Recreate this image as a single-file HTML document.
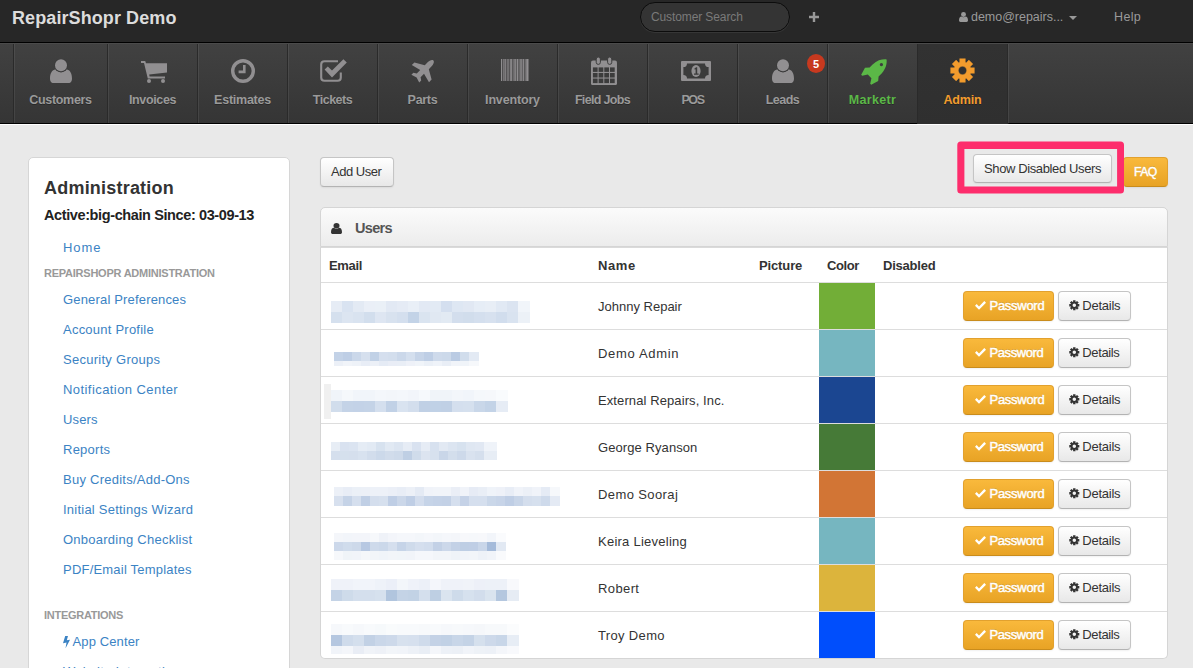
<!DOCTYPE html>
<html><head><meta charset="utf-8"><title>RepairShopr Demo</title>
<style>
*{box-sizing:border-box;margin:0;padding:0}
html,body{width:1193px;height:668px;overflow:hidden}
body{background:#e9e9e9;font-family:"Liberation Sans",sans-serif;font-size:13px;color:#333;position:relative}
svg{display:block;position:absolute}
.t{position:absolute;white-space:nowrap}
#top{position:absolute;left:0;top:0;width:1193px;height:42px;background:#272727}
#brand{left:12px;top:6px;font-size:18px;font-weight:bold;color:#dcdcdc;line-height:24px;letter-spacing:-0.1px}
#search{position:absolute;left:640px;top:2px;width:150px;height:30px;border-radius:15px;background:#343434;border:1px solid #0c0c0c;box-shadow:0 1px 0 rgba(255,255,255,.07)}
#search span{position:absolute;left:10px;top:7px;font-size:12px;line-height:14px;color:#7a7a7a;white-space:nowrap;font-weight:bold}
.toptxt{color:#9a9a9a;font-size:12.5px;line-height:16px;margin-top:1px}
#navline{position:absolute;left:0;top:42px;width:1193px;height:1px;background:#000}
#nav{position:absolute;left:0;top:43px;width:1193px;height:81px;background:linear-gradient(#414141,#353535);border-top:1px solid #4b4b4b;border-bottom:1px solid #000;box-shadow:0 1px 0 #fff}
.ni{position:absolute;top:0;height:79px;border-left:1px solid #2a2a2a;box-shadow:inset 1px 0 0 rgba(255,255,255,.07)}
.ni .lbl{position:absolute;left:0;right:0;top:49px;text-align:center;font-size:12.5px;line-height:14px;font-weight:bold;color:#9a9a9a;white-space:nowrap;text-shadow:0 1px 0 rgba(0,0,0,.3)}
.ni.active{background:linear-gradient(#323232,#2f2f2f);box-shadow:none;height:80px}
#navend{position:absolute;top:0;height:80px;width:2px;border-left:1px solid #2a2a2a;box-shadow:inset 1px 0 0 rgba(255,255,255,.07)}
#badge{position:absolute;left:807px;top:54px;width:18px;height:19px;border-radius:9px/9.5px;background:#c7391f;color:#fff;font-size:11px;font-weight:bold;text-align:center;line-height:20px}
/* sidebar */
#side{position:absolute;left:28px;top:157px;width:262px;height:530px;background:#fff;border:1px solid #d6d6d6;border-radius:5px}
#side .h1{left:15px;top:18px;font-size:18px;font-weight:bold;color:#333;line-height:24px}
#side .h2{left:15px;top:47px;font-size:14.5px;font-weight:bold;color:#222;line-height:20px}
.lnk{color:#3b83c4;font-size:13px;line-height:18px;left:34px}
.sh{left:15px;margin-top:1px;font-size:11px;font-weight:bold;color:#999;line-height:14px;text-transform:uppercase}
/* buttons */
.btn{position:absolute;height:30px;border:1px solid #c5c5c5;border-bottom-color:#b3b3b3;border-radius:4px;background:linear-gradient(#ffffff,#e8e8e8);box-shadow:0 1px 2px rgba(0,0,0,.06);color:#333;font-size:13px;line-height:28px;white-space:nowrap}
.btn.w{background:linear-gradient(#f9b93c,#e8a325);border-color:#e2a12e #e2a12e #c98c1c;color:#fff;-webkit-text-stroke:0.45px #fff;text-shadow:0 -1px 0 rgba(0,0,0,.15)}
.btn .t{top:0}
/* widget */
#wh{position:absolute;left:320px;top:207px;width:848px;height:40px;background:linear-gradient(#fbfbfb,#ececec);border:1px solid #d5d5d5;border-radius:5px 5px 0 0}
#wb{position:absolute;left:320px;top:247px;width:848px;height:412px;background:#fff;border:1px solid #d5d5d5;border-top:1px solid #dadada;border-radius:0 0 5px 5px;overflow:hidden}
.th{font-weight:bold;color:#333;font-size:13px;line-height:16px;top:10px}
.row{position:absolute;left:0;width:846px;height:47px;border-top:1px solid #ddd}
.row .nm{left:277px;top:16px;font-size:13px;line-height:16px;color:#333}
.sw{position:absolute;left:498px;top:0;width:56px;height:46px}
.bl{position:absolute}
#pink{position:absolute;left:957.5px;top:141.7px;width:166.5px;height:51.5px;border:6.7px solid #fc2e6d;border-radius:5px}
</style></head><body>
<div id="top">
<div class="t " id="brand" style="letter-spacing:0.09px">RepairShopr Demo</div>
<div id="search"><div class="t " style="left:10px;top:7px;font-size:12px;line-height:14px;color:#7a7a7a;letter-spacing:-0.11px">Customer Search</div></div>
<svg style="left:809px;top:12px" width="10" height="10" viewBox="0 0 10 10"><path d="M3.8 0 H6.2 V3.8 H10 V6.2 H6.2 V10 H3.8 V6.2 H0 V3.8 H3.8 Z" fill="#999"/></svg>
<svg style="left:959px;top:12px" width="9" height="10" viewBox="0 0 22 24"><circle cx="11" cy="6" r="6" fill="#999"/><path d="M0 20 C0 13.5 2.5 11 6 10.6 C7.3 11.8 9 12.6 11 12.6 C13 12.6 14.7 11.8 16 10.6 C19.5 11 22 13.5 22 20 C22 22.5 20.5 24 18.5 24 L3.5 24 C1.5 24 0 22.5 0 20 Z" fill="#999"/></svg>
<div class="t toptxt" style="left:971px;top:8px;letter-spacing:-0.02px">demo@repairs...</div>
<svg style="left:1069px;top:16px" width="8" height="4" viewBox="0 0 8 4"><path d="M0 0 H8 L4 4 Z" fill="#999"/></svg>
<div class="t toptxt" style="left:1114px;top:8px;letter-spacing:0.35px">Help</div>
</div><div id="navline"></div><div id="nav">
<div class="ni" style="left:13px;width:94px"><svg style="left:36.0px;top:15.0px" width="22" height="24.4" viewBox="0 0 22 24"><path d="M0 19.5 C0 13.8 2 10.8 5.6 10 C6.8 11.8 8.8 12.8 11 12.8 C13.2 12.8 15.2 11.8 16.4 10 C20 10.8 22 13.8 22 19.5 C22 22.5 20.5 24 18 24 L4 24 C1.5 24 0 22.5 0 19.5 Z" fill="#918f91"/><circle cx="11" cy="6.2" r="7" fill="#3c3c3c"/><circle cx="11" cy="6" r="6" fill="#918f91"/></svg><div class="t lbl" style="letter-spacing:-0.31px">Customers</div></div>
<div class="ni" style="left:107px;width:90px"><svg style="left:33.0px;top:17.0px" width="26" height="22" viewBox="0 0 26 22"><path d="M0 0 H4.2 L5 2.2 H26 V11.5 L8.2 13.6 L8.6 15.6 H24 V17.6 H6.8 L3 2 H0 Z" fill="#918f91"/><circle cx="8" cy="20" r="2" fill="#918f91"/><circle cx="22" cy="20" r="2" fill="#918f91"/></svg><div class="t lbl" style="letter-spacing:-0.36px">Invoices</div></div>
<div class="ni" style="left:197px;width:90px"><svg style="left:33.0px;top:15.0px" width="24" height="24" viewBox="0 0 24 24"><circle cx="12" cy="12" r="10.3" fill="none" stroke="#918f91" stroke-width="3.4"/><path d="M12 6 H14.6 V14.2 H7.6 V11.6 H12 Z" fill="#918f91"/></svg><div class="t lbl" style="letter-spacing:-0.25px">Estimates</div></div>
<div class="ni" style="left:287px;width:90px"><svg style="left:31.0px;top:15.0px" width="28" height="24" viewBox="0 0 28 24"><path d="M19 2.2 H5.5 Q2.2 2.2 2.2 5.5 V18.5 Q2.2 21.8 5.5 21.8 H18.5 Q21.8 21.8 21.8 18.5 V13.5" fill="none" stroke="#918f91" stroke-width="2.1"/><path d="M5.6 10.6 L8.8 7.4 L13 11.6 L24.4 0.2 L27.8 3.6 L13 18.4 Z" fill="#918f91"/></svg><div class="t lbl" style="letter-spacing:-0.50px">Tickets</div></div>
<div class="ni" style="left:377px;width:90px"><svg style="left:33.0px;top:14.5px" width="24" height="24" viewBox="0 0 24 24"><path d="M22.4 1.6 C23.6 2.8 22.4 5.6 20.4 7.6 L17.8 10.2 L20.6 20.6 L18 23.2 L13 14.8 L9.6 18.2 L10.2 21.6 L8.2 23.6 L5.6 18.4 L0.4 15.8 L2.4 13.8 L5.8 14.4 L9.2 11 L0.8 6 L3.4 3.4 L13.8 6.2 L16.4 3.6 C18.4 1.6 21.2 0.4 22.4 1.6 Z" fill="#918f91"/></svg><div class="t lbl" style="letter-spacing:-0.30px">Parts</div></div>
<div class="ni" style="left:467px;width:90px"><svg style="left:32.5px;top:14.7px" width="28.6" height="22.4" viewBox="0 0 29 22.4" preserveAspectRatio="none"><rect x="0" y="0" width="28.6" height="22.4" fill="#918f91" opacity="0.22"/><rect x="0" y="0" width="1" height="22.4" fill="#918f91"/><rect x="2" y="0" width="0.6" height="22.4" fill="#918f91"/><rect x="3.6" y="0" width="1.2" height="22.4" fill="#918f91"/><rect x="6" y="0" width="0.6" height="22.4" fill="#918f91"/><rect x="7.6" y="0" width="0.6" height="22.4" fill="#918f91"/><rect x="9.4" y="0" width="1.6" height="22.4" fill="#918f91"/><rect x="12" y="0" width="0.6" height="22.4" fill="#918f91"/><rect x="13.6" y="0" width="1.4" height="22.4" fill="#918f91"/><rect x="16" y="0" width="1.2" height="22.4" fill="#918f91"/><rect x="18" y="0" width="0.6" height="22.4" fill="#918f91"/><rect x="19.6" y="0" width="1.4" height="22.4" fill="#918f91"/><rect x="22" y="0" width="1.2" height="22.4" fill="#918f91"/><rect x="24.2" y="0" width="0.6" height="22.4" fill="#918f91"/><rect x="25.6" y="0" width="1.8" height="22.4" fill="#918f91"/><rect x="28" y="0" width="0.6" height="22.4" fill="#918f91"/></svg><div class="t lbl" style="letter-spacing:-0.16px">Inventory</div></div>
<div class="ni" style="left:557px;width:90px"><svg style="left:33.0px;top:13.0px" width="26" height="28.2" viewBox="0 0 26 28.2"><path d="M2 3.6 H24 Q26 3.6 26 5.6 V26.2 Q26 28.2 24 28.2 H2 Q0 28.2 0 26.2 V5.6 Q0 3.6 2 3.6 Z" fill="#918f91"/><rect x="1.9" y="10.4" width="4.7" height="4.5" fill="#3c3c3c"/><rect x="7.6" y="10.4" width="4.7" height="4.5" fill="#3c3c3c"/><rect x="13.3" y="10.4" width="4.7" height="4.5" fill="#3c3c3c"/><rect x="19.0" y="10.4" width="4.7" height="4.5" fill="#3c3c3c"/><rect x="1.9" y="16.0" width="4.7" height="4.5" fill="#3c3c3c"/><rect x="7.6" y="16.0" width="4.7" height="4.5" fill="#3c3c3c"/><rect x="13.3" y="16.0" width="4.7" height="4.5" fill="#3c3c3c"/><rect x="19.0" y="16.0" width="4.7" height="4.5" fill="#3c3c3c"/><rect x="1.9" y="21.6" width="4.7" height="4.5" fill="#3c3c3c"/><rect x="7.6" y="21.6" width="4.7" height="4.5" fill="#3c3c3c"/><rect x="13.3" y="21.6" width="4.7" height="4.5" fill="#3c3c3c"/><rect x="19.0" y="21.6" width="4.7" height="4.5" fill="#3c3c3c"/><rect x="5.2" y="0" width="4.2" height="7.4" rx="2.1" fill="#918f91" stroke="#3c3c3c" stroke-width="1"/><rect x="16.6" y="0" width="4.2" height="7.4" rx="2.1" fill="#918f91" stroke="#3c3c3c" stroke-width="1"/></svg><div class="t lbl" style="letter-spacing:-0.66px">Field Jobs</div></div>
<div class="ni" style="left:647px;width:90px"><svg style="left:33.0px;top:17.0px" width="30" height="20" viewBox="0 0 30 20"><rect x="0" y="0" width="30" height="20" rx="1" fill="#918f91"/><path d="M6 2.4 H24 Q24 6 27.6 6 V14 Q24 14 24 17.6 H6 Q6 14 2.4 14 V6 Q6 6 6 2.4 Z" fill="#3b3b3b"/><ellipse cx="15" cy="10" rx="4.6" ry="6" fill="#918f91"/><path d="M13.4 7.6 L15.2 6.2 H16.2 V12.6 H17.6 V13.8 H13 V12.6 H14.6 V8.2 L13.8 8.8 Z" fill="#3b3b3b"/></svg><div class="t lbl" style="letter-spacing:-1.40px">POS</div></div>
<div class="ni" style="left:737px;width:90px"><svg style="left:33.5px;top:15.0px" width="22" height="24.4" viewBox="0 0 22 24"><path d="M0 19.5 C0 13.8 2 10.8 5.6 10 C6.8 11.8 8.8 12.8 11 12.8 C13.2 12.8 15.2 11.8 16.4 10 C20 10.8 22 13.8 22 19.5 C22 22.5 20.5 24 18 24 L4 24 C1.5 24 0 22.5 0 19.5 Z" fill="#918f91"/><circle cx="11" cy="6.2" r="7" fill="#3c3c3c"/><circle cx="11" cy="6" r="6" fill="#918f91"/></svg><div class="t lbl" style="letter-spacing:-0.50px">Leads</div></div>
<div class="ni" style="left:827px;width:90px"><svg style="left:33.0px;top:14.5px" width="26" height="26" viewBox="0 0 26 26"><path d="M25.6 0.4 C26 4.5 25 9.5 20.6 14.4 L17.6 17.4 L17.2 22 L10.2 25.8 L9.2 24.8 L10.4 19.2 L6.8 15.6 L1.2 16.8 L0.2 15.8 L4 8.8 L8.6 8.4 L11.6 5.4 C16.5 1 21.5 0 25.6 0.4 Z M20.4 4 a1.6 1.6 0 1 0 0.01 0 Z" fill="#5bb847" fill-rule="evenodd"/></svg><div class="t lbl" style="color:#5bb847;letter-spacing:0.33px">Marketr</div></div>
<div class="ni active" style="left:917px;width:90px"><svg style="left:32.4px;top:14.3px" width="25" height="25" viewBox="0 0 25 25"><path d="M9.71 4.36 L9.66 0.64 L15.34 0.64 L15.29 4.36 L16.28 4.78 L18.88 2.10 L22.90 6.12 L20.22 8.72 L20.64 9.71 L24.36 9.66 L24.36 15.34 L20.64 15.29 L20.22 16.28 L22.90 18.88 L18.88 22.90 L16.28 20.22 L15.29 20.64 L15.34 24.36 L9.66 24.36 L9.71 20.64 L8.72 20.22 L6.12 22.90 L2.10 18.88 L4.78 16.28 L4.36 15.29 L0.64 15.34 L0.64 9.66 L4.36 9.71 L4.78 8.72 L2.10 6.12 L6.12 2.10 L8.72 4.78 Z M8.35 12.50 a4.15 4.15 0 1 0 8.30 0 a4.15 4.15 0 1 0 -8.30 0 Z" fill="#f39c2d" fill-rule="evenodd" stroke="#f39c2d" stroke-width="0.4" stroke-linejoin="round"/></svg><div class="t lbl" style="color:#f39c2d;letter-spacing:-0.17px">Admin</div></div>
<div id="navend" style="left:1007px"></div>
</div>
<div id="badge">5</div>
<div id="side">
<div class="t h1" style="letter-spacing:0.21px">Administration</div>
<div class="t h2" style="letter-spacing:-0.39px">Active:big-chain Since: 03-09-13</div>
<div class="t lnk" style="top:81px;letter-spacing:0.93px">Home</div>
<div class="t lnk" style="top:133px;letter-spacing:0.17px">General Preferences</div>
<div class="t lnk" style="top:163px;letter-spacing:0.23px">Account Profile</div>
<div class="t lnk" style="top:193px;letter-spacing:0.27px">Security Groups</div>
<div class="t lnk" style="top:223px;letter-spacing:0.43px">Notification Center</div>
<div class="t lnk" style="top:253px;letter-spacing:0.13px">Users</div>
<div class="t lnk" style="top:283px;letter-spacing:0.25px">Reports</div>
<div class="t lnk" style="top:313px;letter-spacing:0.25px">Buy Credits/Add-Ons</div>
<div class="t lnk" style="top:343px;letter-spacing:0.23px">Initial Settings Wizard</div>
<div class="t lnk" style="top:373px;letter-spacing:0.25px">Onboarding Checklist</div>
<div class="t lnk" style="top:403px;letter-spacing:0.21px">PDF/Email Templates</div>
<div class="t sh" style="top:107px;letter-spacing:-0.24px">REPAIRSHOPR ADMINISTRATION</div>
<div class="t sh" style="top:449px;letter-spacing:-0.27px">INTEGRATIONS</div>
<svg style="left:33.6px;top:477.5px" width="7" height="12.4" viewBox="0 0 7 12.4"><path d="M2.2 0 H5 L3.8 4.3 L7 3.7 L2.5 12.4 L3.5 6.5 L0 7.2 Z" fill="#3b83c4"/></svg>
<div class="t lnk" style="left:43.5px;top:475px;letter-spacing:0.12px">App Center</div>
<div class="t lnk" style="top:505px;letter-spacing:0.28px">Website Integration</div>
</div>
<div class="btn" style="left:320px;top:157px;width:74px"><div class="t " style="left:10px;letter-spacing:-0.47px">Add User</div></div>
<div class="btn" style="left:973px;top:154px;width:139px;height:29px"><div class="t " style="left:10px;line-height:27px;letter-spacing:-0.38px">Show Disabled Users</div></div>
<div class="btn w" style="left:1123px;top:157px;width:45px"><div class="t " style="left:10px;font-size:12.2px;letter-spacing:-0.63px">FAQ</div></div>
<svg style="left:950px;top:135px" width="180" height="65" viewBox="950 135 180 65"><path d="M960.8 141.6 H1120.5 Q1124 141.6 1124 145.1 V190 Q1124 193.5 1120.5 193.5 H960.8 Q957.3 193.5 957.3 190 V145.1 Q957.3 141.6 960.8 141.6 Z M964.4 148.9 V186.5 H1117.1 V148.9 Z" fill="#fd2d6c" fill-rule="evenodd"/></svg>
<div id="wh">
<svg style="left:10px;top:15px" width="11" height="11" viewBox="0 0 22 24" preserveAspectRatio="none"><circle cx="11" cy="6" r="6" fill="#333"/><path d="M0 20 C0 13.5 2.5 11 6 10.6 C7.3 11.8 9 12.6 11 12.6 C13 12.6 14.7 11.8 16 10.6 C19.5 11 22 13.5 22 20 C22 22.5 20.5 24 18.5 24 L3.5 24 C1.5 24 0 22.5 0 20 Z" fill="#333"/></svg>
<div class="t " style="left:34px;top:11px;font-size:14.5px;font-weight:bold;color:#555;line-height:18px;letter-spacing:-0.69px">Users</div>
</div><div id="wb">
<div class="t th" style="left:8px;letter-spacing:-0.32px">Email</div>
<div class="t th" style="left:277px;letter-spacing:0.58px">Name</div>
<div class="t th" style="left:438px;letter-spacing:-0.13px">Picture</div>
<div class="t th" style="left:506px;letter-spacing:-0.38px">Color</div>
<div class="t th" style="left:562px;letter-spacing:-0.22px">Disabled</div>
<div class="row" style="top:34px">
<div class="bl" style="left:10px;top:18px;width:199px;height:11px;background:linear-gradient(90deg,#e6ecf5 0px,#e6ecf5 11px,#d9e3f1 11px,#d9e3f1 22px,#e3eaf4 22px,#e3eaf4 33px,#eaeff7 33px,#eaeff7 44px,#eaf0f7 44px,#eaf0f7 55px,#e2e9f4 55px,#e2e9f4 66px,#e5ebf5 66px,#e5ebf5 77px,#e9eff7 77px,#e9eff7 88px,#e2e9f4 88px,#e2e9f4 99px,#e2eaf4 99px,#e2eaf4 110px,#d4dfef 110px,#d4dfef 121px,#dee7f3 121px,#dee7f3 132px,#e1e8f3 132px,#e1e8f3 143px,#e6edf6 143px,#e6edf6 154px,#e8eef6 154px,#e8eef6 165px,#e1e9f4 165px,#e1e9f4 176px,#dbe4f1 176px,#dbe4f1 187px,#f1f5fa 187px,#f1f5fa 198px)"></div>
<div class="bl" style="left:10px;top:29px;width:199px;height:11px;background:linear-gradient(90deg,#d5e0ee 0px,#d5e0ee 11px,#dce5f1 11px,#dce5f1 22px,#d9e3f0 22px,#d9e3f0 33px,#d2deed 33px,#d2deed 44px,#dee6f2 44px,#dee6f2 55px,#d8e2ef 55px,#d8e2ef 66px,#d4dfee 66px,#d4dfee 77px,#c3d3e7 77px,#c3d3e7 88px,#dae4f0 88px,#dae4f0 99px,#e0e8f2 99px,#e0e8f2 110px,#e2eaf3 110px,#e2eaf3 121px,#d3deed 121px,#d3deed 132px,#d1ddec 132px,#d1ddec 143px,#d4dfee 143px,#d4dfee 154px,#d7e1ef 154px,#d7e1ef 165px,#d1dded 165px,#d1dded 176px,#d9e3f0 176px,#d9e3f0 187px,#ecf1f7 187px,#ecf1f7 198px)"></div>
<div class="t nm" style="letter-spacing:0.00px">Johnny Repair</div>
<div class="sw" style="background:#72ae37"></div>
<div class="btn w" style="left:642px;top:8px;width:91px"><svg style="left:11px;top:9px" width="11" height="9" viewBox="0 0 11 9"><path d="M0 4.8 L1.7 3.1 L4 5.4 L9.3 0.1 L11 1.8 L4 8.8 Z" fill="#fff"/></svg><div class="t " style="left:25.5px;letter-spacing:-0.28px">Password</div></div>
<div class="btn" style="left:737px;top:8px;width:73px"><svg style="left:10px;top:8.3px" width="10.6" height="10.6" viewBox="0 0 25 25"><path d="M9.71 4.36 L9.66 0.64 L15.34 0.64 L15.29 4.36 L16.28 4.78 L18.88 2.10 L22.90 6.12 L20.22 8.72 L20.64 9.71 L24.36 9.66 L24.36 15.34 L20.64 15.29 L20.22 16.28 L22.90 18.88 L18.88 22.90 L16.28 20.22 L15.29 20.64 L15.34 24.36 L9.66 24.36 L9.71 20.64 L8.72 20.22 L6.12 22.90 L2.10 18.88 L4.78 16.28 L4.36 15.29 L0.64 15.34 L0.64 9.66 L4.36 9.71 L4.78 8.72 L2.10 6.12 L6.12 2.10 L8.72 4.78 Z M8.35 12.50 a4.15 4.15 0 1 0 8.30 0 a4.15 4.15 0 1 0 -8.30 0 Z" fill="#333" fill-rule="evenodd"/></svg><div class="t " style="left:23.3px;letter-spacing:-0.25px">Details</div></div>
</div>
<div class="row" style="top:81px">
<div class="bl" style="left:13px;top:22px;width:145px;height:9px;background:linear-gradient(90deg,#c3d2e7 0px,#c3d2e7 9px,#becee5 9px,#becee5 18px,#cbd8ea 18px,#cbd8ea 27px,#d6e0ee 27px,#d6e0ee 36px,#c1d1e6 36px,#c1d1e6 45px,#d5dfee 45px,#d5dfee 54px,#d3deed 54px,#d3deed 63px,#cbd8ea 63px,#cbd8ea 72px,#d4dfee 72px,#d4dfee 81px,#c6d4e8 81px,#c6d4e8 90px,#becee5 90px,#becee5 99px,#cedaeb 99px,#cedaeb 108px,#ccd9ea 108px,#ccd9ea 117px,#bacbe3 117px,#bacbe3 126px,#d1ddec 126px,#d1ddec 135px,#e3eaf4 135px,#e3eaf4 144px)"></div>
<div class="bl" style="left:13px;top:31px;width:145px;height:5px;background:linear-gradient(90deg,#ecf0f7 0px,#ecf0f7 9px,#f1f4f9 9px,#f1f4f9 18px,#eef2f8 18px,#eef2f8 27px,#e8edf6 27px,#e8edf6 36px,#ecf0f7 36px,#ecf0f7 45px,#e5ebf5 45px,#e5ebf5 54px,#e9edf6 54px,#e9edf6 63px,#e9eef6 63px,#e9eef6 72px,#eef1f8 72px,#eef1f8 81px,#f0f4f9 81px,#f0f4f9 90px,#ebf0f7 90px,#ebf0f7 99px,#eff3f9 99px,#eff3f9 108px,#e9eef6 108px,#e9eef6 117px,#f1f4f9 117px,#f1f4f9 126px,#f0f4f9 126px,#f0f4f9 135px,#f6f8fb 135px,#f6f8fb 144px)"></div>
<div class="t nm" style="letter-spacing:0.67px">Demo Admin</div>
<div class="sw" style="background:#76b6c0"></div>
<div class="btn w" style="left:642px;top:8px;width:91px"><svg style="left:11px;top:9px" width="11" height="9" viewBox="0 0 11 9"><path d="M0 4.8 L1.7 3.1 L4 5.4 L9.3 0.1 L11 1.8 L4 8.8 Z" fill="#fff"/></svg><div class="t " style="left:25.5px;letter-spacing:-0.40px">Password</div></div>
<div class="btn" style="left:737px;top:8px;width:73px"><svg style="left:10px;top:8.3px" width="10.6" height="10.6" viewBox="0 0 25 25"><path d="M9.71 4.36 L9.66 0.64 L15.34 0.64 L15.29 4.36 L16.28 4.78 L18.88 2.10 L22.90 6.12 L20.22 8.72 L20.64 9.71 L24.36 9.66 L24.36 15.34 L20.64 15.29 L20.22 16.28 L22.90 18.88 L18.88 22.90 L16.28 20.22 L15.29 20.64 L15.34 24.36 L9.66 24.36 L9.71 20.64 L8.72 20.22 L6.12 22.90 L2.10 18.88 L4.78 16.28 L4.36 15.29 L0.64 15.34 L0.64 9.66 L4.36 9.71 L4.78 8.72 L2.10 6.12 L6.12 2.10 L8.72 4.78 Z M8.35 12.50 a4.15 4.15 0 1 0 8.30 0 a4.15 4.15 0 1 0 -8.30 0 Z" fill="#333" fill-rule="evenodd"/></svg><div class="t " style="left:23.3px;letter-spacing:-0.38px">Details</div></div>
</div>
<div class="row" style="top:128px">
<div class="bl" style="left:3px;top:7px;width:7px;height:35px;background:#f0f0f0"></div>
<div class="bl" style="left:10px;top:13px;width:177px;height:11px;background:linear-gradient(90deg,#f0f4f9 0px,#f0f4f9 11px,#f5f8fb 11px,#f5f8fb 22px,#f1f5fa 22px,#f1f5fa 33px,#f1f5fa 33px,#f1f5fa 44px,#f4f7fb 44px,#f4f7fb 55px,#f3f6fa 55px,#f3f6fa 66px,#f4f7fb 66px,#f4f7fb 77px,#f2f5fa 77px,#f2f5fa 88px,#f6f9fc 88px,#f6f9fc 99px,#f0f4f9 99px,#f0f4f9 110px,#f0f4f9 110px,#f0f4f9 121px,#f3f6fa 121px,#f3f6fa 132px,#f1f5fa 132px,#f1f5fa 143px,#f5f8fb 143px,#f5f8fb 154px,#f6f8fb 154px,#f6f8fb 165px,#f9fbfd 165px,#f9fbfd 176px)"></div>
<div class="bl" style="left:10px;top:24px;width:177px;height:11px;background:linear-gradient(90deg,#d1ddec 0px,#d1ddec 11px,#c4d3e7 11px,#c4d3e7 22px,#c3d2e7 22px,#c3d2e7 33px,#c4d3e7 33px,#c4d3e7 44px,#d4dfee 44px,#d4dfee 55px,#c1d1e6 55px,#c1d1e6 66px,#d9e3f0 66px,#d9e3f0 77px,#d3deed 77px,#d3deed 88px,#c0d0e5 88px,#c0d0e5 99px,#c0d1e6 99px,#c0d1e6 110px,#c0d0e5 110px,#c0d0e5 121px,#d4dfee 121px,#d4dfee 132px,#d5e0ee 132px,#d5e0ee 143px,#c9d7e9 143px,#c9d7e9 154px,#c3d3e7 154px,#c3d3e7 165px,#e6ecf5 165px,#e6ecf5 176px)"></div>
<div class="t nm" style="letter-spacing:0.10px">External Repairs, Inc.</div>
<div class="sw" style="background:#1b4691"></div>
<div class="btn w" style="left:642px;top:8px;width:91px"><svg style="left:11px;top:9px" width="11" height="9" viewBox="0 0 11 9"><path d="M0 4.8 L1.7 3.1 L4 5.4 L9.3 0.1 L11 1.8 L4 8.8 Z" fill="#fff"/></svg><div class="t " style="left:25.5px;letter-spacing:-0.28px">Password</div></div>
<div class="btn" style="left:737px;top:8px;width:73px"><svg style="left:10px;top:8.3px" width="10.6" height="10.6" viewBox="0 0 25 25"><path d="M9.71 4.36 L9.66 0.64 L15.34 0.64 L15.29 4.36 L16.28 4.78 L18.88 2.10 L22.90 6.12 L20.22 8.72 L20.64 9.71 L24.36 9.66 L24.36 15.34 L20.64 15.29 L20.22 16.28 L22.90 18.88 L18.88 22.90 L16.28 20.22 L15.29 20.64 L15.34 24.36 L9.66 24.36 L9.71 20.64 L8.72 20.22 L6.12 22.90 L2.10 18.88 L4.78 16.28 L4.36 15.29 L0.64 15.34 L0.64 9.66 L4.36 9.71 L4.78 8.72 L2.10 6.12 L6.12 2.10 L8.72 4.78 Z M8.35 12.50 a4.15 4.15 0 1 0 8.30 0 a4.15 4.15 0 1 0 -8.30 0 Z" fill="#333" fill-rule="evenodd"/></svg><div class="t " style="left:23.3px;letter-spacing:-0.25px">Details</div></div>
</div>
<div class="row" style="top:175px">
<div class="bl" style="left:10px;top:18px;width:166px;height:9px;background:linear-gradient(90deg,#e7edf5 0px,#e7edf5 9px,#d9e2f0 9px,#d9e2f0 18px,#dbe4f1 18px,#dbe4f1 27px,#e5ecf5 27px,#e5ecf5 36px,#e2eaf4 36px,#e2eaf4 45px,#d7e2ef 45px,#d7e2ef 54px,#e1e9f3 54px,#e1e9f3 63px,#dce5f1 63px,#dce5f1 72px,#e6ecf5 72px,#e6ecf5 81px,#d9e2f0 81px,#d9e2f0 90px,#e6ecf5 90px,#e6ecf5 99px,#d7e1ef 99px,#d7e1ef 108px,#e2e9f3 108px,#e2e9f3 117px,#dce5f1 117px,#dce5f1 126px,#d7e2ef 126px,#d7e2ef 135px,#dfe7f2 135px,#dfe7f2 144px,#e1e8f3 144px,#e1e8f3 153px,#eff3f9 153px,#eff3f9 162px)"></div>
<div class="bl" style="left:10px;top:27px;width:166px;height:9px;background:linear-gradient(90deg,#d5dfed 0px,#d5dfed 9px,#d5e0ed 9px,#d5e0ed 18px,#d5dfed 18px,#d5dfed 27px,#d8e2ef 27px,#d8e2ef 36px,#d2ddec 36px,#d2ddec 45px,#ccd9ea 45px,#ccd9ea 54px,#d1dceb 54px,#d1dceb 63px,#cedaea 63px,#cedaea 72px,#bfcfe4 72px,#bfcfe4 81px,#d0dceb 81px,#d0dceb 90px,#dce4f0 90px,#dce4f0 99px,#d7e1ee 99px,#d7e1ee 108px,#c9d6e8 108px,#c9d6e8 117px,#d3deec 117px,#d3deec 126px,#cdd9ea 126px,#cdd9ea 135px,#d9e2ef 135px,#d9e2ef 144px,#d5dfed 144px,#d5dfed 153px,#e7edf5 153px,#e7edf5 162px)"></div>
<div class="t nm" style="letter-spacing:0.08px">George Ryanson</div>
<div class="sw" style="background:#467a37"></div>
<div class="btn w" style="left:642px;top:8px;width:91px"><svg style="left:11px;top:9px" width="11" height="9" viewBox="0 0 11 9"><path d="M0 4.8 L1.7 3.1 L4 5.4 L9.3 0.1 L11 1.8 L4 8.8 Z" fill="#fff"/></svg><div class="t " style="left:25.5px;letter-spacing:-0.40px">Password</div></div>
<div class="btn" style="left:737px;top:8px;width:73px"><svg style="left:10px;top:8.3px" width="10.6" height="10.6" viewBox="0 0 25 25"><path d="M9.71 4.36 L9.66 0.64 L15.34 0.64 L15.29 4.36 L16.28 4.78 L18.88 2.10 L22.90 6.12 L20.22 8.72 L20.64 9.71 L24.36 9.66 L24.36 15.34 L20.64 15.29 L20.22 16.28 L22.90 18.88 L18.88 22.90 L16.28 20.22 L15.29 20.64 L15.34 24.36 L9.66 24.36 L9.71 20.64 L8.72 20.22 L6.12 22.90 L2.10 18.88 L4.78 16.28 L4.36 15.29 L0.64 15.34 L0.64 9.66 L4.36 9.71 L4.78 8.72 L2.10 6.12 L6.12 2.10 L8.72 4.78 Z M8.35 12.50 a4.15 4.15 0 1 0 8.30 0 a4.15 4.15 0 1 0 -8.30 0 Z" fill="#333" fill-rule="evenodd"/></svg><div class="t " style="left:23.3px;letter-spacing:-0.25px">Details</div></div>
</div>
<div class="row" style="top:222px">
<div class="bl" style="left:13px;top:16px;width:226px;height:9px;background:linear-gradient(90deg,#ecf0f7 0px,#ecf0f7 9px,#e8edf6 9px,#e8edf6 18px,#ebf0f7 18px,#ebf0f7 27px,#ecf0f7 27px,#ecf0f7 36px,#edf1f8 36px,#edf1f8 45px,#edf1f8 45px,#edf1f8 54px,#ebeff7 54px,#ebeff7 63px,#e8edf6 63px,#e8edf6 72px,#ecf0f7 72px,#ecf0f7 81px,#e4eaf4 81px,#e4eaf4 90px,#f0f3f9 90px,#f0f3f9 99px,#f1f4f9 99px,#f1f4f9 108px,#f1f4f9 108px,#f1f4f9 117px,#eaeef6 117px,#eaeef6 126px,#f0f3f9 126px,#f0f3f9 135px,#e6ebf5 135px,#e6ebf5 144px,#e9eef6 144px,#e9eef6 153px,#eff3f9 153px,#eff3f9 162px,#eef1f8 162px,#eef1f8 171px,#e8edf6 171px,#e8edf6 180px,#f0f3f9 180px,#f0f3f9 189px,#ecf0f7 189px,#ecf0f7 198px,#f0f3f9 198px,#f0f3f9 207px,#e5ebf5 207px,#e5ebf5 216px,#f6f8fb 216px,#f6f8fb 225px)"></div>
<div class="bl" style="left:13px;top:25px;width:226px;height:10px;background:linear-gradient(90deg,#d7e0ee 0px,#d7e0ee 9px,#c5d3e7 9px,#c5d3e7 18px,#d5dfee 18px,#d5dfee 27px,#c0cfe5 27px,#c0cfe5 36px,#d4deed 36px,#d4deed 45px,#d6e0ee 45px,#d6e0ee 54px,#bfcee5 54px,#bfcee5 63px,#cbd7e9 63px,#cbd7e9 72px,#bfcee5 72px,#bfcee5 81px,#d3dded 81px,#d3dded 90px,#c6d4e8 90px,#c6d4e8 99px,#c4d2e7 99px,#c4d2e7 108px,#c3d1e6 108px,#c3d1e6 117px,#d5dfee 117px,#d5dfee 126px,#c5d2e7 126px,#c5d2e7 135px,#d5dfee 135px,#d5dfee 144px,#d5dfee 144px,#d5dfee 153px,#cad7e9 153px,#cad7e9 162px,#c7d4e8 162px,#c7d4e8 171px,#bfcee5 171px,#bfcee5 180px,#c8d5e8 180px,#c8d5e8 189px,#d4deed 189px,#d4deed 198px,#d6e0ee 198px,#d6e0ee 207px,#cedaeb 207px,#cedaeb 216px,#e4eaf4 216px,#e4eaf4 225px)"></div>
<div class="t nm" style="letter-spacing:0.40px">Demo Sooraj</div>
<div class="sw" style="background:#d27535"></div>
<div class="btn w" style="left:642px;top:8px;width:91px"><svg style="left:11px;top:9px" width="11" height="9" viewBox="0 0 11 9"><path d="M0 4.8 L1.7 3.1 L4 5.4 L9.3 0.1 L11 1.8 L4 8.8 Z" fill="#fff"/></svg><div class="t " style="left:25.5px;letter-spacing:-0.28px">Password</div></div>
<div class="btn" style="left:737px;top:8px;width:73px"><svg style="left:10px;top:8.3px" width="10.6" height="10.6" viewBox="0 0 25 25"><path d="M9.71 4.36 L9.66 0.64 L15.34 0.64 L15.29 4.36 L16.28 4.78 L18.88 2.10 L22.90 6.12 L20.22 8.72 L20.64 9.71 L24.36 9.66 L24.36 15.34 L20.64 15.29 L20.22 16.28 L22.90 18.88 L18.88 22.90 L16.28 20.22 L15.29 20.64 L15.34 24.36 L9.66 24.36 L9.71 20.64 L8.72 20.22 L6.12 22.90 L2.10 18.88 L4.78 16.28 L4.36 15.29 L0.64 15.34 L0.64 9.66 L4.36 9.71 L4.78 8.72 L2.10 6.12 L6.12 2.10 L8.72 4.78 Z M8.35 12.50 a4.15 4.15 0 1 0 8.30 0 a4.15 4.15 0 1 0 -8.30 0 Z" fill="#333" fill-rule="evenodd"/></svg><div class="t " style="left:23.3px;letter-spacing:-0.25px">Details</div></div>
</div>
<div class="row" style="top:269px">
<div class="bl" style="left:13px;top:15px;width:172px;height:9px;background:linear-gradient(90deg,#f4f6fa 0px,#f4f6fa 9px,#f2f5fa 9px,#f2f5fa 18px,#f3f5fa 18px,#f3f5fa 27px,#f3f5fa 27px,#f3f5fa 36px,#f6f8fb 36px,#f6f8fb 45px,#eff2f8 45px,#eff2f8 54px,#f3f5fa 54px,#f3f5fa 63px,#f5f7fb 63px,#f5f7fb 72px,#f5f7fb 72px,#f5f7fb 81px,#f3f6fa 81px,#f3f6fa 90px,#f5f7fb 90px,#f5f7fb 99px,#f3f6fa 99px,#f3f6fa 108px,#f5f7fb 108px,#f5f7fb 117px,#f4f6fa 117px,#f4f6fa 126px,#f7f8fb 126px,#f7f8fb 135px,#f6f8fb 135px,#f6f8fb 144px,#f7f8fb 144px,#f7f8fb 153px,#f2f5fa 153px,#f2f5fa 162px,#fafbfd 162px,#fafbfd 171px)"></div>
<div class="bl" style="left:13px;top:24px;width:172px;height:9px;background:linear-gradient(90deg,#ccd8ea 0px,#ccd8ea 9px,#d0dcec 9px,#d0dcec 18px,#cdd9ea 18px,#cdd9ea 27px,#b7c8e2 27px,#b7c8e2 36px,#cedaeb 36px,#cedaeb 45px,#cbd8ea 45px,#cbd8ea 54px,#d5dfee 54px,#d5dfee 63px,#c6d4e8 63px,#c6d4e8 72px,#cfdbeb 72px,#cfdbeb 81px,#d5dfee 81px,#d5dfee 90px,#d2dded 90px,#d2dded 99px,#c3d1e6 99px,#c3d1e6 108px,#ccd8ea 108px,#ccd8ea 117px,#c3d1e6 117px,#c3d1e6 126px,#becee4 126px,#becee4 135px,#bfcee5 135px,#bfcee5 144px,#c9d6e9 144px,#c9d6e9 153px,#a5bbda 153px,#a5bbda 162px,#e2e9f3 162px,#e2e9f3 171px)"></div>
<div class="bl" style="left:13px;top:33px;width:172px;height:9px;background:linear-gradient(90deg,#f6f8fb 0px,#f6f8fb 9px,#f0f4f8 9px,#f0f4f8 18px,#f1f4f9 18px,#f1f4f9 27px,#f5f7fa 27px,#f5f7fa 36px,#f2f5f9 36px,#f2f5f9 45px,#f0f4f9 45px,#f0f4f9 54px,#f2f5f9 54px,#f2f5f9 63px,#f1f5f9 63px,#f1f5f9 72px,#f1f4f9 72px,#f1f4f9 81px,#f5f7fb 81px,#f5f7fb 90px,#f5f7fb 90px,#f5f7fb 99px,#f2f5f9 99px,#f2f5f9 108px,#f2f5f9 108px,#f2f5f9 117px,#eff3f8 117px,#eff3f8 126px,#f1f4f9 126px,#f1f4f9 135px,#f2f5f9 135px,#f2f5f9 144px,#eef2f8 144px,#eef2f8 153px,#f1f4f9 153px,#f1f4f9 162px,#f9fafc 162px,#f9fafc 171px)"></div>
<div class="t nm" style="letter-spacing:0.25px">Keira Lieveling</div>
<div class="sw" style="background:#76b6c0"></div>
<div class="btn w" style="left:642px;top:8px;width:91px"><svg style="left:11px;top:9px" width="11" height="9" viewBox="0 0 11 9"><path d="M0 4.8 L1.7 3.1 L4 5.4 L9.3 0.1 L11 1.8 L4 8.8 Z" fill="#fff"/></svg><div class="t " style="left:25.5px;letter-spacing:-0.40px">Password</div></div>
<div class="btn" style="left:737px;top:8px;width:73px"><svg style="left:10px;top:8.3px" width="10.6" height="10.6" viewBox="0 0 25 25"><path d="M9.71 4.36 L9.66 0.64 L15.34 0.64 L15.29 4.36 L16.28 4.78 L18.88 2.10 L22.90 6.12 L20.22 8.72 L20.64 9.71 L24.36 9.66 L24.36 15.34 L20.64 15.29 L20.22 16.28 L22.90 18.88 L18.88 22.90 L16.28 20.22 L15.29 20.64 L15.34 24.36 L9.66 24.36 L9.71 20.64 L8.72 20.22 L6.12 22.90 L2.10 18.88 L4.78 16.28 L4.36 15.29 L0.64 15.34 L0.64 9.66 L4.36 9.71 L4.78 8.72 L2.10 6.12 L6.12 2.10 L8.72 4.78 Z M8.35 12.50 a4.15 4.15 0 1 0 8.30 0 a4.15 4.15 0 1 0 -8.30 0 Z" fill="#333" fill-rule="evenodd"/></svg><div class="t " style="left:23.3px;letter-spacing:-0.25px">Details</div></div>
</div>
<div class="row" style="top:316px">
<div class="bl" style="left:10px;top:14px;width:188px;height:11px;background:linear-gradient(90deg,#eff2f9 0px,#eff2f9 11px,#eff2f9 11px,#eff2f9 22px,#f1f4fa 22px,#f1f4fa 33px,#f1f4fa 33px,#f1f4fa 44px,#eef2f9 44px,#eef2f9 55px,#ebeff8 55px,#ebeff8 66px,#f3f6fa 66px,#f3f6fa 77px,#eff2f9 77px,#eff2f9 88px,#ecf0f8 88px,#ecf0f8 99px,#f4f6fb 99px,#f4f6fb 110px,#eff2f9 110px,#eff2f9 121px,#eff2f9 121px,#eff2f9 132px,#f0f3f9 132px,#f0f3f9 143px,#edf0f8 143px,#edf0f8 154px,#edf1f8 154px,#edf1f8 165px,#edf1f8 165px,#edf1f8 176px,#f8f9fc 176px,#f8f9fc 187px)"></div>
<div class="bl" style="left:10px;top:25px;width:188px;height:11px;background:linear-gradient(90deg,#c4d3e6 0px,#c4d3e6 11px,#cedbea 11px,#cedbea 22px,#d4dfed 22px,#d4dfed 33px,#d4dfed 33px,#d4dfed 44px,#d6e1ee 44px,#d6e1ee 55px,#b1c5de 55px,#b1c5de 66px,#c4d3e6 66px,#c4d3e6 77px,#c2d2e5 77px,#c2d2e5 88px,#d4dfed 88px,#d4dfed 99px,#becfe3 99px,#becfe3 110px,#dae4ef 110px,#dae4ef 121px,#cedbea 121px,#cedbea 132px,#d6e1ee 132px,#d6e1ee 143px,#d2ddec 143px,#d2ddec 154px,#dae4ef 154px,#dae4ef 165px,#b4c7df 165px,#b4c7df 176px,#e6ecf4 176px,#e6ecf4 187px)"></div>
<div class="t nm" style="letter-spacing:0.39px">Robert</div>
<div class="sw" style="background:#dcb43c"></div>
<div class="btn w" style="left:642px;top:8px;width:91px"><svg style="left:11px;top:9px" width="11" height="9" viewBox="0 0 11 9"><path d="M0 4.8 L1.7 3.1 L4 5.4 L9.3 0.1 L11 1.8 L4 8.8 Z" fill="#fff"/></svg><div class="t " style="left:25.5px;letter-spacing:-0.28px">Password</div></div>
<div class="btn" style="left:737px;top:8px;width:73px"><svg style="left:10px;top:8.3px" width="10.6" height="10.6" viewBox="0 0 25 25"><path d="M9.71 4.36 L9.66 0.64 L15.34 0.64 L15.29 4.36 L16.28 4.78 L18.88 2.10 L22.90 6.12 L20.22 8.72 L20.64 9.71 L24.36 9.66 L24.36 15.34 L20.64 15.29 L20.22 16.28 L22.90 18.88 L18.88 22.90 L16.28 20.22 L15.29 20.64 L15.34 24.36 L9.66 24.36 L9.71 20.64 L8.72 20.22 L6.12 22.90 L2.10 18.88 L4.78 16.28 L4.36 15.29 L0.64 15.34 L0.64 9.66 L4.36 9.71 L4.78 8.72 L2.10 6.12 L6.12 2.10 L8.72 4.78 Z M8.35 12.50 a4.15 4.15 0 1 0 8.30 0 a4.15 4.15 0 1 0 -8.30 0 Z" fill="#333" fill-rule="evenodd"/></svg><div class="t " style="left:23.3px;letter-spacing:-0.25px">Details</div></div>
</div>
<div class="row" style="top:363px">
<div class="bl" style="left:10px;top:12px;width:188px;height:11px;background:linear-gradient(90deg,#f6f8fb 0px,#f6f8fb 11px,#f8fafc 11px,#f8fafc 22px,#f6f8fb 22px,#f6f8fb 33px,#f8fafc 33px,#f8fafc 44px,#f6f9fb 44px,#f6f9fb 55px,#f9fbfc 55px,#f9fbfc 66px,#f8fafc 66px,#f8fafc 77px,#f8fafc 77px,#f8fafc 88px,#f7f9fb 88px,#f7f9fb 99px,#f8fafc 99px,#f8fafc 110px,#f6f8fb 110px,#f6f8fb 121px,#f7f9fb 121px,#f7f9fb 132px,#f6f8fb 132px,#f6f8fb 143px,#f5f7fa 143px,#f5f7fa 154px,#f7f9fb 154px,#f7f9fb 165px,#f7f9fb 165px,#f7f9fb 176px,#fbfcfd 176px,#fbfcfd 187px)"></div>
<div class="bl" style="left:10px;top:23px;width:188px;height:11px;background:linear-gradient(90deg,#b5c7e0 0px,#b5c7e0 11px,#cfdbeb 11px,#cfdbeb 22px,#d4dfed 22px,#d4dfed 33px,#c2d1e5 33px,#c2d1e5 44px,#cad7e9 44px,#cad7e9 55px,#cdd9ea 55px,#cdd9ea 66px,#d7e1ee 66px,#d7e1ee 77px,#d6e0ee 77px,#d6e0ee 88px,#cfdbeb 88px,#cfdbeb 99px,#c4d2e6 99px,#c4d2e6 110px,#c1d1e5 110px,#c1d1e5 121px,#c8d6e8 121px,#c8d6e8 132px,#c4d3e6 132px,#c4d3e6 143px,#d5e0ed 143px,#d5e0ed 154px,#cdd9ea 154px,#cdd9ea 165px,#c8d6e8 165px,#c8d6e8 176px,#e7edf5 176px,#e7edf5 187px)"></div>
<div class="bl" style="left:10px;top:34px;width:188px;height:8px;background:linear-gradient(90deg,#f1f4f9 0px,#f1f4f9 11px,#f4f6fa 11px,#f4f6fa 22px,#e9edf5 22px,#e9edf5 33px,#f0f3f8 33px,#f0f3f8 44px,#eef1f7 44px,#eef1f7 55px,#f2f5f9 55px,#f2f5f9 66px,#f1f4f9 66px,#f1f4f9 77px,#edf1f7 77px,#edf1f7 88px,#e9eef5 88px,#e9eef5 99px,#f4f6fa 99px,#f4f6fa 110px,#edf1f7 110px,#edf1f7 121px,#ecf0f6 121px,#ecf0f6 132px,#f1f4f9 132px,#f1f4f9 143px,#eef2f7 143px,#eef2f7 154px,#edf1f7 154px,#edf1f7 165px,#f4f6fa 165px,#f4f6fa 176px,#f8f9fc 176px,#f8f9fc 187px)"></div>
<div class="t nm" style="letter-spacing:0.34px">Troy Demo</div>
<div class="sw" style="background:#004efc"></div>
<div class="btn w" style="left:642px;top:8px;width:91px"><svg style="left:11px;top:9px" width="11" height="9" viewBox="0 0 11 9"><path d="M0 4.8 L1.7 3.1 L4 5.4 L9.3 0.1 L11 1.8 L4 8.8 Z" fill="#fff"/></svg><div class="t " style="left:25.5px;letter-spacing:-0.40px">Password</div></div>
<div class="btn" style="left:737px;top:8px;width:73px"><svg style="left:10px;top:8.3px" width="10.6" height="10.6" viewBox="0 0 25 25"><path d="M9.71 4.36 L9.66 0.64 L15.34 0.64 L15.29 4.36 L16.28 4.78 L18.88 2.10 L22.90 6.12 L20.22 8.72 L20.64 9.71 L24.36 9.66 L24.36 15.34 L20.64 15.29 L20.22 16.28 L22.90 18.88 L18.88 22.90 L16.28 20.22 L15.29 20.64 L15.34 24.36 L9.66 24.36 L9.71 20.64 L8.72 20.22 L6.12 22.90 L2.10 18.88 L4.78 16.28 L4.36 15.29 L0.64 15.34 L0.64 9.66 L4.36 9.71 L4.78 8.72 L2.10 6.12 L6.12 2.10 L8.72 4.78 Z M8.35 12.50 a4.15 4.15 0 1 0 8.30 0 a4.15 4.15 0 1 0 -8.30 0 Z" fill="#333" fill-rule="evenodd"/></svg><div class="t " style="left:23.3px;letter-spacing:-0.38px">Details</div></div>
</div>
</div>
</body></html>
